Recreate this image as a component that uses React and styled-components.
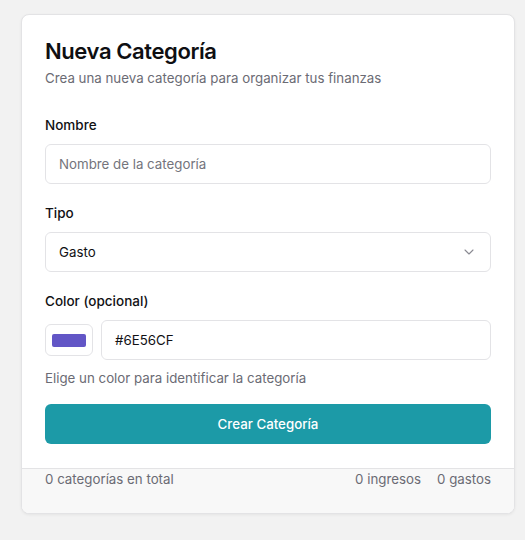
import React from "react";
import styled, { createGlobalStyle } from "styled-components";

const Global = createGlobalStyle`
  html, body { margin: 0; padding: 0; background: #f2f2f2; }
  body { font-family: Inter, "Noto Sans", sans-serif; color: #111114; -webkit-font-smoothing: antialiased; }
  * { box-sizing: border-box; }
`;

const Page = styled.div`
  padding: 14px 0 0 21px;
  min-height: 540px;
`;

const Card = styled.div`
  width: 494px;
  background: #ffffff;
  border: 1px solid #e3e3e5;
  border-radius: 8px;
  box-shadow: 0 1px 3px rgba(0, 0, 0, 0.06);
  overflow: hidden;
`;

const Body = styled.div`
  padding: 22px 23px 24px 23px;
`;

const Title = styled.h2`
  margin: 0;
  font-size: 22px;
  line-height: 28px;
  font-weight: 600;
  letter-spacing: -0.4px;
  color: #0f0f12;
`;

const Subtitle = styled.p`
  margin: 3px 0 0;
  font-size: 13.3px;
  line-height: 20px;
  color: #6b6b74;
`;

const Form = styled.div`
  margin-top: 27px;
  display: flex;
  flex-direction: column;
  gap: 19px;
`;

const Field = styled.div`
  display: flex;
  flex-direction: column;
  gap: 9px;
`;

const Label = styled.label`
  font-size: 13.5px;
  line-height: 20px;
  font-weight: 500;
  color: #111114;
`;

const Input = styled.div`
  height: 40px;
  display: flex;
  align-items: center;
  padding: 0 13px;
  border: 1px solid #e3e3e6;
  border-radius: 6px;
  background: #fff;
  font-size: 13.3px;
  color: ${(p) => (p.$placeholder ? "#74747c" : "#111114")};
  flex: ${(p) => (p.$grow ? "1" : "none")};
`;

const Select = styled(Input)`
  justify-content: space-between;
  padding-right: 13px;
`;

const ColorRow = styled.div`
  display: flex;
  align-items: center;
  gap: 8px;
`;

const Swatch = styled.div`
  width: 48px;
  height: 32px;
  border: 1px solid #e3e3e6;
  border-radius: 6px;
  padding: 8px 6px;
  display: flex;
  align-items: center;
  justify-content: center;
`;

const SwatchFill = styled.div`
  width: 34px;
  height: 13px;
  border-radius: 2px;
  background: ${(p) => p.$color};
`;

const Help = styled.p`
  margin: -1px 0 0;
  font-size: 13.3px;
  line-height: 20px;
  color: #6b6b74;
`;

const Button = styled.button`
  margin-top: -3px;
  height: 40px;
  border: none;
  border-radius: 6px;
  background: #1c9aa7;
  color: #ffffff;
  font-family: inherit;
  font-size: 13.3px;
  font-weight: 500;
  width: 100%;
`;

const Footer = styled.div`
  border-top: 1px solid #e3e3e5;
  background: #f8f8f8;
  padding: 0 23px 24px;
  display: flex;
  justify-content: space-between;
  font-size: 13.3px;
  line-height: 20px;
  color: #6b6b74;
`;

const Stats = styled.div`
  display: flex;
  gap: 16px;
`;

const Chevron = () => (
  <svg width="16" height="16" viewBox="0 0 24 24" fill="none" stroke="#8a8a92" strokeWidth="1.6" strokeLinecap="round" strokeLinejoin="round">
    <path d="m6 9 6 6 6-6" />
  </svg>
);

export default function App() {
  return (
    <Page>
      <Global />
      <Card>
        <Body>
          <Title>Nueva Categoría</Title>
          <Subtitle>Crea una nueva categoría para organizar tus finanzas</Subtitle>
          <Form>
            <Field>
              <Label>Nombre</Label>
              <Input $placeholder>Nombre de la categoría</Input>
            </Field>
            <Field>
              <Label>Tipo</Label>
              <Select>
                <span>Gasto</span>
                <Chevron />
              </Select>
            </Field>
            <Field>
              <Label>Color (opcional)</Label>
              <ColorRow>
                <Swatch>
                  <SwatchFill $color="#6256c6" />
                </Swatch>
                <Input $grow>#6E56CF</Input>
              </ColorRow>
              <Help>Elige un color para identificar la categoría</Help>
            </Field>
            <Button>Crear Categoría</Button>
          </Form>
        </Body>
        <Footer>
          <span>0 categorías en total</span>
          <Stats>
            <span>0 ingresos</span>
            <span>0 gastos</span>
          </Stats>
        </Footer>
      </Card>
    </Page>
  );
}
